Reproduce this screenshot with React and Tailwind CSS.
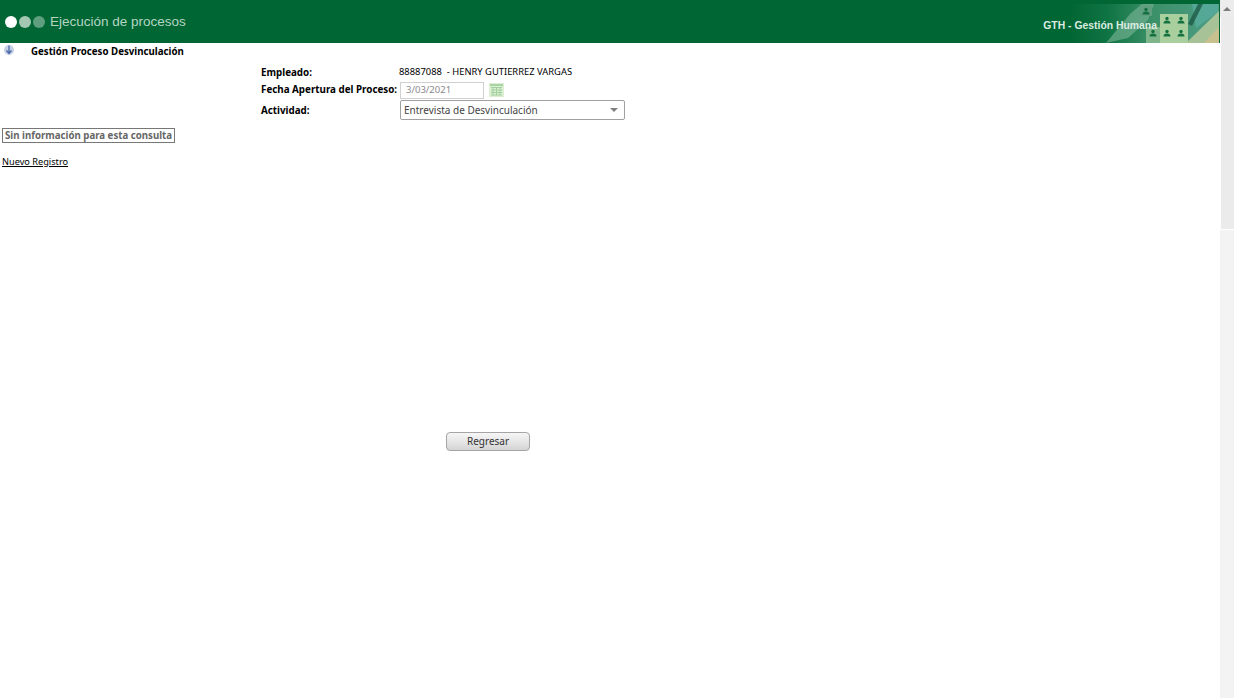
const tahoma = { fontFamily: '"Noto Sans", "DejaVu Sans", sans-serif' };

const PersonTile = ({ x, y, w = 14, h = 13, fill = '#a9cf9f' }) => (
  <g>
    <rect x={x} y={y} width={w} height={h} fill={fill} />
    <circle cx={x + w / 2} cy={y + 4.5} r="1.7" fill="#14703f" />
    <path d={`M${x + w / 2 - 3.5} ${y + 9.5} q0 -3 3.5 -3 q3.5 0 3.5 3 z`} fill="#14703f" />
  </g>
);

const HeaderArt = () => (
  <svg width="150" height="43" viewBox="0 0 150 43" className="block">
    <defs>
      <linearGradient id="fade" x1="0" y1="0" x2="1" y2="0">
        <stop offset="0" stopColor="#006633" />
        <stop offset="0.25" stopColor="#0f7443" />
        <stop offset="0.55" stopColor="#3b9068" />
        <stop offset="1" stopColor="#4e9e86" />
      </linearGradient>
    </defs>
    <rect y="4" width="150" height="39" fill="url(#fade)" />
    <path d="M36 43 L60 14 L72 4 L84 4 L78 20 L58 38 Z" fill="#7db59a" opacity="0.6" />
    <path d="M116 43 L150 10 L150 43 Z" fill="#b3c79a" opacity="0.9" />
    <path d="M122 4 L148 4 L148 12 L126 28 Z" fill="#58ab9c" opacity="0.8" />
    <path d="M118 24 L128 4 L133 4 L122 26 Z" fill="#1d5a46" opacity="0.8" />
    <path d="M134 43 L150 26 L150 43 Z" fill="#cfc08e" opacity="0.85" />
    <PersonTile x={70} y={5} w={12} h={11} fill="#5f9f80" />
    <PersonTile x={90} y={14} />
    <PersonTile x={104} y={14} />
    <PersonTile x={76} y={27} h={16} fill="#7fb58a" />
    <PersonTile x={90} y={27} h={16} />
    <PersonTile x={104} y={27} h={16} />
    <rect x="149" y="0" width="1" height="43" fill="#006633" />
  </svg>
);

const Header = () => (
  <header className="flex h-[43px] items-center justify-between bg-[#006633]">
    <div className="flex items-center pl-[5px]">
      <span className="h-[12px] w-[12px] rounded-full bg-white" />
      <span className="ml-[2px] h-[12px] w-[12px] rounded-full bg-[#a3c7b2]" />
      <span className="ml-[2px] h-[12px] w-[12px] rounded-full bg-[#5f9f7f]" />
      <span className="ml-[5px] font-['Liberation_Sans',sans-serif] text-[13.5px] leading-[20px] text-[#b5d5c3]">Ejecución de procesos</span>
    </div>
    <div className="relative">
      <HeaderArt />
      <span className="absolute right-[63px] top-[19px] whitespace-nowrap font-['Liberation_Sans',sans-serif] text-[10.4px] font-bold leading-[14px] text-[#dcebe2]">
        GTH - Gestión Humana
      </span>
    </div>
  </header>
);

const CalendarIcon = () => (
  <svg width="15" height="14" viewBox="0 0 15 14" className="ml-[5px]">
    <rect width="15" height="14" fill="#dcefd2" />
    <rect x="1" y="1" width="13" height="2" fill="#a9d3a4" />
    <path d="M2 4.5H13M2 7H13M2 9.5H13M2 12H13M4 4V12M7.5 4V12M11 4V12" stroke="#a3d0a0" strokeWidth="1" fill="none" />
  </svg>
);

const App = () => (
  <div className="flex h-[698px] overflow-hidden bg-white" style={tahoma}>
    <div className="min-w-0 flex-1">
      <Header />

      <div className="flex h-[17px] items-center pl-[3px]">
        <svg width="12" height="12" viewBox="0 0 12 12" className="-mt-[3px]">
          <circle cx="6" cy="6" r="5" fill="#c5d0e6" />
          <path d="M6 1.5V8.5M3.5 6.5L6 9.5L8.5 6.5" stroke="#4a6aa8" strokeWidth="1.3" fill="none" />
        </svg>
        <h1 className="ml-[16px] text-[9.7px] font-bold leading-none text-black">Gestión Proceso Desvinculación</h1>
      </div>

      <div className="ml-[261px] mt-[4px] grid w-[364px] grid-cols-[139px_225px] items-center text-[9.8px] text-black">
        <label className="h-[17px] font-bold leading-[17px]">Empleado:</label>
        <span className="-ml-[1px] h-[17px] whitespace-nowrap text-[9.4px] leading-[15px]">88887088&nbsp; - HENRY GUTIERREZ VARGAS</span>
        <label className="h-[18px] whitespace-nowrap font-bold leading-[18px]">Fecha Apertura del Proceso:</label>
        <div className="flex h-[18px] items-center">
          <div className="flex h-[17px] w-[84px] items-center border border-[#d0d0d0] pl-[5px] text-[9.5px] text-[#8a8a8a]">3/03/2021</div>
          <CalendarIcon />
        </div>
        <label className="mt-[1px] pt-[2px] font-bold">Actividad:</label>
        <div className="mt-[1px] flex h-[20px] items-center justify-between rounded-[2px] border border-[#a0a0a0] pl-[3px] pr-[3px] text-[10px] text-[#444]">
          <span>Entrevista de Desvinculación</span>
          <span className="mr-[3px] h-0 w-0 border-x-[4px] border-t-[4px] border-x-transparent border-t-[#808080]" />
        </div>
      </div>

      <div className="ml-[2px] mt-[8px] inline-block border border-[#777] px-[2px] text-[9.68px] font-bold leading-[13px] text-[#666]">
        Sin información para esta consulta
      </div>

      <div className="ml-[2px] mt-[11px] text-[9.2px] leading-[12px]">
        <a className="text-black underline">Nuevo Registro</a>
      </div>

      <div className="ml-[446px] mt-[259px]">
        <button className="h-[19px] w-[84px] rounded-[4px] border border-[#a5a5a5] bg-gradient-to-b from-[#f6f6f6] via-[#e6e6e6] to-[#d4d4d4] text-[10px] leading-none text-[#333]">
          Regresar
        </button>
      </div>
    </div>

    <div className="flex h-full w-[14px] shrink-0 flex-col bg-[#f1f1f1]">
      <div className="flex h-[17px] items-center justify-center bg-[#ececec]">
        <span className="h-0 w-0 border-x-[4px] border-b-[4px] border-x-transparent border-b-[#7d7d7d]" />
      </div>
      <div className="h-[213px] border-b border-l border-white bg-[#ebebeb]" />
      <div className="flex-1 bg-[#f3f3f3]" />
    </div>
  </div>
);

export default App;
